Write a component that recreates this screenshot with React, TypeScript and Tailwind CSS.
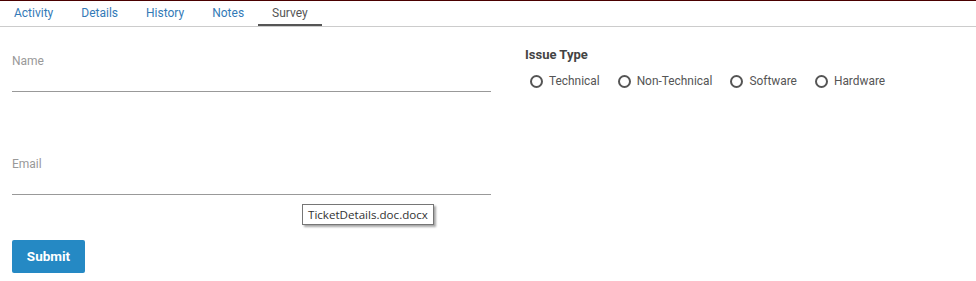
import React from "react";

const tabs = ["Activity", "Details", "History", "Notes", "Survey"];
const options = ["Technical", "Non-Technical", "Software", "Hardware"];

export default function App() {
  return (
    <div
      className="relative w-[976px] h-[281px] bg-white overflow-hidden"
      style={{ fontFamily: "Roboto, 'Liberation Sans', sans-serif" }}
    >
      <div className="h-[1px] bg-[#4a0000]" />
      <div className="flex h-[26px] border-b border-[#cccccc]">
        {tabs.map((t) => {
          const active = t === "Survey";
          return (
            <div
              key={t}
              className={`px-[14px] h-[25px] flex items-center text-[12px] leading-none ${
                active ? "text-[#555555] border-b-[2px] border-[#555555] pt-[2px]" : "text-[#337ab7]"
              }`}
            >
              <span className="pb-[2px]">{t}</span>
            </div>
          );
        })}
      </div>

      <div className="flex">
        <div className="w-[479px] ml-[12px]">
          <div className="pt-[26px]">
            <div className="text-[12px] leading-[16px] text-[#999999]">Name</div>
            <div className="h-[23px] border-b border-[#999999]" />
          </div>
          <div className="pt-[64px]">
            <div className="text-[12px] leading-[16px] text-[#999999]">Email</div>
            <div className="h-[23px] border-b border-[#999999]" />
          </div>
          <div className="pt-[45px]">
            <button className="w-[73px] h-[33px] bg-[#2589c4] rounded-[2px] text-white text-[13.5px] font-bold">
              Submit
            </button>
          </div>
        </div>
        <div className="ml-[34px] pt-[20px]">
          <div className="text-[13px] leading-[16px] font-bold text-[#444444]">Issue Type</div>
          <div className="flex items-center gap-[18px] mt-[10px] ml-[5px]">
            {options.map((o) => (
              <div key={o} className="flex items-center gap-[6px]">
                <span className="w-[13px] h-[13px] rounded-full border-[2px] border-[#555555]" />
                <span className="text-[11.9px] leading-[16px] text-[#555555]">{o}</span>
              </div>
            ))}
          </div>
        </div>
      </div>

      <div
        className="absolute left-[302px] top-[204px] h-[21px] px-[5px] flex items-center border border-[#767676] bg-white text-[11.6px] text-[#333333] shadow-[2px_2px_2px_rgba(0,0,0,0.35)]"
        style={{ fontFamily: "'Open Sans', 'DejaVu Sans', sans-serif" }}
      >
        TicketDetails.doc.docx
      </div>
    </div>
  );
}
